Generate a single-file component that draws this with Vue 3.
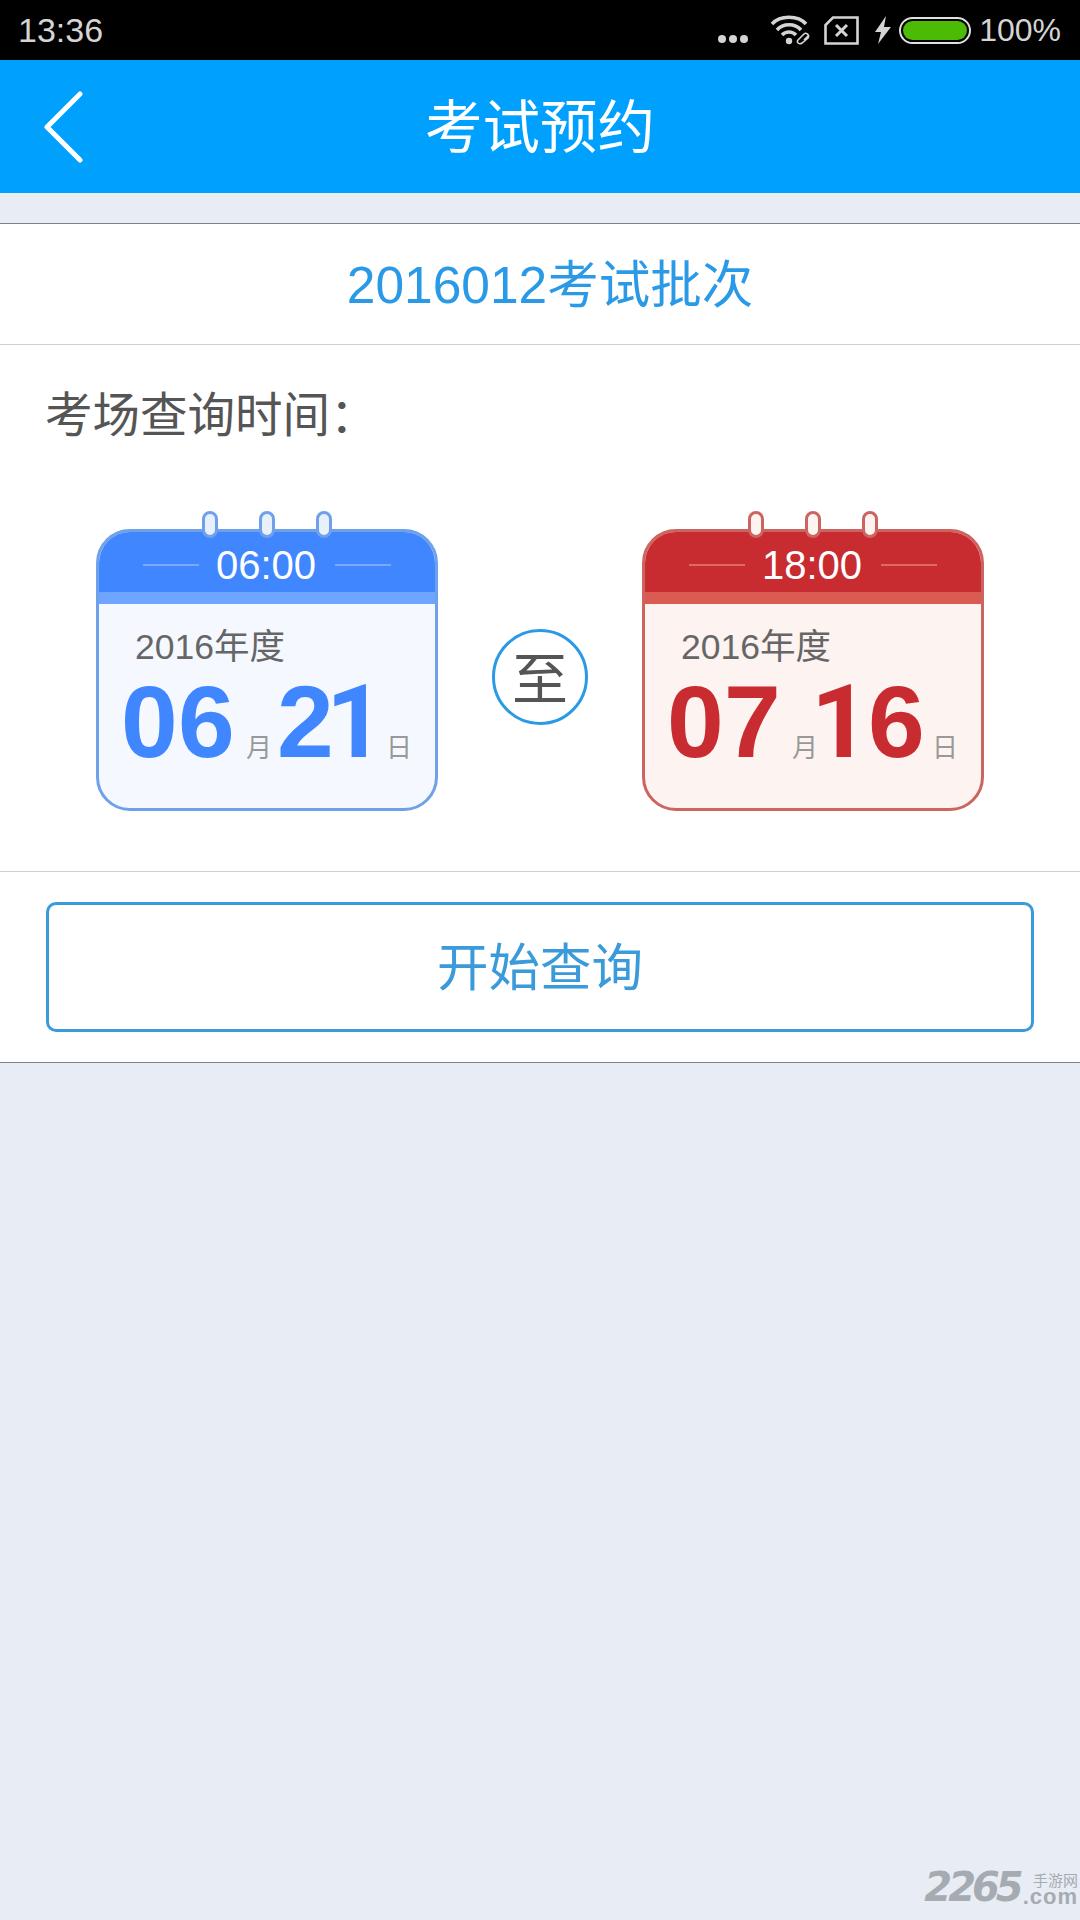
<template>
  <div class="page">
    <div class="status-bar">
      <span class="clock">13:36</span>
      <div class="status-icons">
        <svg class="dots" width="32" height="10" viewBox="0 0 32 10">
          <circle cx="5" cy="5" r="4" />
          <circle cx="16" cy="5" r="4" />
          <circle cx="27" cy="5" r="4" />
        </svg>
        <svg class="wifi" width="44" height="30" viewBox="0 0 44 30" fill="none" stroke="#d4d4d4" stroke-width="3.6">
          <path d="M2 9 C10 0 28 0 36 9" />
          <path d="M7 15 C13 8 25 8 31 15" />
          <path d="M12 20 C16 16 22 16 26 20" />
          <circle cx="19" cy="26" r="3.2" fill="#d4d4d4" stroke="none" />
          <path stroke-width="1.6" d="M28 25 L34 19 C36 17 40 20 38 23 L32 28 C29 30 26 27 28 25 Z M34 25 L39 20" />
        </svg>
        <svg class="sim" width="35" height="29" viewBox="0 0 35 29" fill="none" stroke="#d4d4d4" stroke-width="2.6">
          <path d="M9 1.5 H33.5 V27.5 H1.5 V9 Z" />
          <path stroke-width="3" d="M12 9 L23 20 M23 9 L12 20" />
        </svg>
        <svg class="bolt" width="16" height="28" viewBox="0 0 16 28">
          <path d="M11 0 L0 16 H6 L3 28 L16 11 H9 Z" fill="#d4d4d4" />
        </svg>
        <div class="battery"><div class="battery-fill"></div></div>
        <span class="percent">100%</span>
      </div>
    </div>

    <header class="nav">
      <svg class="back" width="40" height="72" viewBox="0 0 40 72" fill="none" stroke="#fff" stroke-width="5" stroke-linecap="round" stroke-linejoin="round">
        <path d="M36 3 L3 36 L36 69" />
      </svg>
      <h1>考试预约</h1>
    </header>

    <main class="card">
      <div class="batch">2016012考试批次</div>

      <section class="time-section">
        <div class="label">考场查询时间：</div>
        <div class="calendars">
          <div v-for="cal in calendars" :key="cal.time" class="cal-wrap" :class="cal.color">
            <div class="rings">
              <span v-for="n in 3" :key="n" class="ring"></span>
            </div>
            <div class="cal">
              <div class="cal-head">
                <span class="dash"></span>
                <span class="time">{{ cal.time }}</span>
                <span class="dash"></span>
              </div>
              <div class="cal-band"></div>
              <div class="cal-body">
                <div class="year">2016年度</div>
                <div class="date">
                  <span class="num">
                    <span v-for="(d, i) in cal.month" :key="i" class="digit">{{ d }}</span>
                  </span>
                  <span class="unit month">月</span>
                  <span class="num day-num">
                    <span v-for="(d, i) in cal.day" :key="i" class="digit" :class="{ one: d === '1' }">{{ d }}</span>
                  </span>
                  <span class="unit day">日</span>
                </div>
              </div>
            </div>
          </div>
          <div class="to">至</div>
        </div>
      </section>

      <div class="action">
        <button class="query">开始查询</button>
      </div>
    </main>

    <div class="watermark">
      <span class="wm-num">2265</span>
      <div class="wm-side">
        <span class="wm-cn">手游网</span>
        <span class="wm-com">.com</span>
      </div>
    </div>
  </div>
</template>

<script setup>
const calendars = [
  { time: "06:00", month: "06", day: "21", color: "blue" },
  { time: "18:00", month: "07", day: "16", color: "red" },
];
</script>

<style>
html,
body {
  margin: 0;
  background: #e8edf5;
}
</style>

<style scoped>
.page {
  position: relative;
  width: 1080px;
  height: 1920px;
  overflow: hidden;
  background: #e8edf5;
  font-family: "Liberation Sans", "Noto Sans CJK SC", sans-serif;
}

.status-bar {
  height: 60px;
  background: #000;
  color: #d4d4d4;
  display: flex;
  align-items: center;
  justify-content: space-between;
  padding: 0 19px 0 18px;
  box-sizing: border-box;
}
.clock {
  font-size: 34px;
}
.status-icons {
  display: flex;
  align-items: center;
}
.dots {
  fill: #d4d4d4;
  margin-top: 18px;
}
.wifi {
  margin-left: 21px;
  margin-top: -1px;
}
.sim {
  margin-left: 10px;
}
.bolt {
  margin-left: 16px;
}
.battery {
  width: 72px;
  height: 27px;
  margin-left: 8px;
  border: 2px solid #e0e0e0;
  border-radius: 14px;
  box-sizing: border-box;
  padding: 2px;
  background: #000;
}
.battery-fill {
  height: 100%;
  border-radius: 10px;
  background: #4cbb05;
}
.percent {
  font-size: 32px;
  margin-left: 8px;
}

.nav {
  position: relative;
  height: 133px;
  background: #00a0fe;
  display: flex;
  align-items: center;
  justify-content: center;
}
.nav h1 {
  margin: 0 0 7px 0;
  font-size: 57.5px;
  font-weight: 400;
  color: #fff;
}
.back {
  position: absolute;
  left: 44px;
  top: 31px;
}

.card {
  margin-top: 30px;
  background: #fff;
  border-top: 1px solid #7f8388;
  border-bottom: 1px solid #7f8388;
}
.batch {
  height: 121px;
  display: flex;
  align-items: center;
  justify-content: center;
  padding: 0 0 8px 20px;
  box-sizing: border-box;
  font-size: 51.5px;
  color: #2b9ae6;
  border-bottom: 1px solid #cfcfcf;
}

.time-section {
  height: 527px;
  border-bottom: 1px solid #cfcfcf;
  box-sizing: border-box;
}
.label {
  padding: 43px 0 0 45px;
  height: 56px;
  line-height: 56px;
  font-size: 47.5px;
  color: #555;
}
.calendars {
  margin-top: 85px;
  display: flex;
  justify-content: center;
  align-items: center;
  gap: 54px;
}
.to {
  order: 1;
  width: 96px;
  height: 96px;
  margin-top: 13px;
  padding-bottom: 4px;
  box-sizing: border-box;
  border: 3px solid #2b9ae6;
  border-radius: 50%;
  display: flex;
  align-items: center;
  justify-content: center;
  font-size: 56px;
  color: #555;
}
.cal-wrap {
  position: relative;
  width: 342px;
  height: 282px;
}
.blue {
  order: 0;
  --head: #3f86ff;
  --edge: #6fa1ea;
  --band: #6ea5ff;
  --paper: #f5f9ff;
  --ring: #e8f0fc;
  --dash: #7aa9ff;
  --num: #3f86ff;
}
.red {
  order: 2;
  --head: #c82b30;
  --edge: #cc6560;
  --band: #d95b52;
  --paper: #fdf3f0;
  --ring: #fdf3f0;
  --dash: #de6a62;
  --num: #c82b30;
}
.cal {
  height: 100%;
  box-sizing: border-box;
  border: 3px solid var(--edge);
  border-radius: 34px;
  overflow: hidden;
  background: var(--paper);
}
.rings {
  position: absolute;
  top: -18px;
  left: 0;
  right: 0;
  display: flex;
  justify-content: center;
  gap: 41px;
  z-index: 1;
}
.ring {
  width: 16px;
  height: 27px;
  box-sizing: border-box;
  border: 3px solid var(--edge);
  border-radius: 8px;
  background: var(--ring);
}
.cal-head {
  height: 60px;
  padding-top: 6px;
  box-sizing: border-box;
  background: var(--head);
  display: flex;
  align-items: center;
  justify-content: center;
  gap: 20px;
}
.dash {
  width: 56px;
  height: 2px;
  background: var(--dash);
}
.time {
  width: 96px;
  margin: 0 3px 0 -3px;
  text-align: center;
  font-size: 40px;
  line-height: 54px;
  color: #fff;
}
.cal-band {
  height: 12px;
  background: var(--band);
}
.cal-body {
  padding-left: 36px;
}
.year {
  margin-top: 21px;
  height: 44px;
  line-height: 44px;
  font-size: 35.5px;
  color: #666;
}
.date {
  margin: 3px 0 0 -14px;
  display: flex;
  align-items: baseline;
  height: 100px;
  line-height: 100px;
}
.num {
  display: flex;
  align-items: baseline;
  width: 114px;
  font-size: 102px;
  font-weight: 700;
  color: var(--num);
}
.digit {
  width: 57px;
}
.day-num .digit {
  letter-spacing: -8px;
}
/* the "1" in the reference has no foot, Liberation Sans Bold does */
.one {
  font-family: Roboto, "Liberation Sans", sans-serif;
}
.blue .one {
  margin: 0 8px 0 -8px;
}
.red .day-num {
  margin: 0 12px 0 -12px;
}
.unit {
  width: 26px;
  font-size: 26px;
  letter-spacing: -7px;
  color: #999;
}
.month {
  margin-left: 11px;
  margin-right: 5px;
}
.day {
  margin-left: -5px;
}

.action {
  height: 190px;
  padding: 30px 46px 0;
  box-sizing: border-box;
}
.query {
  display: block;
  width: 988px;
  height: 130px;
  box-sizing: border-box;
  background: #fff;
  border: 3px solid #3a9ada;
  border-radius: 10px;
  padding: 0 0 7px;
  font-family: inherit;
  font-size: 51.5px;
  color: #3a9ada;
}

.watermark {
  position: absolute;
  right: 2px;
  bottom: 16px;
  display: flex;
  align-items: flex-end;
  color: #a6abb1;
}
.wm-num {
  font-size: 40px;
  line-height: 34px;
  font-weight: 700;
  font-style: italic;
  font-family: "DejaVu Sans", sans-serif;
  letter-spacing: -4px;
  margin-right: 3px;
}
.wm-side {
  display: flex;
  flex-direction: column;
  align-items: flex-end;
}
.wm-cn {
  font-size: 15px;
  line-height: 16px;
}
.wm-com {
  font-size: 22px;
  line-height: 15px;
  font-weight: 700;
  letter-spacing: 1px;
}
</style>
